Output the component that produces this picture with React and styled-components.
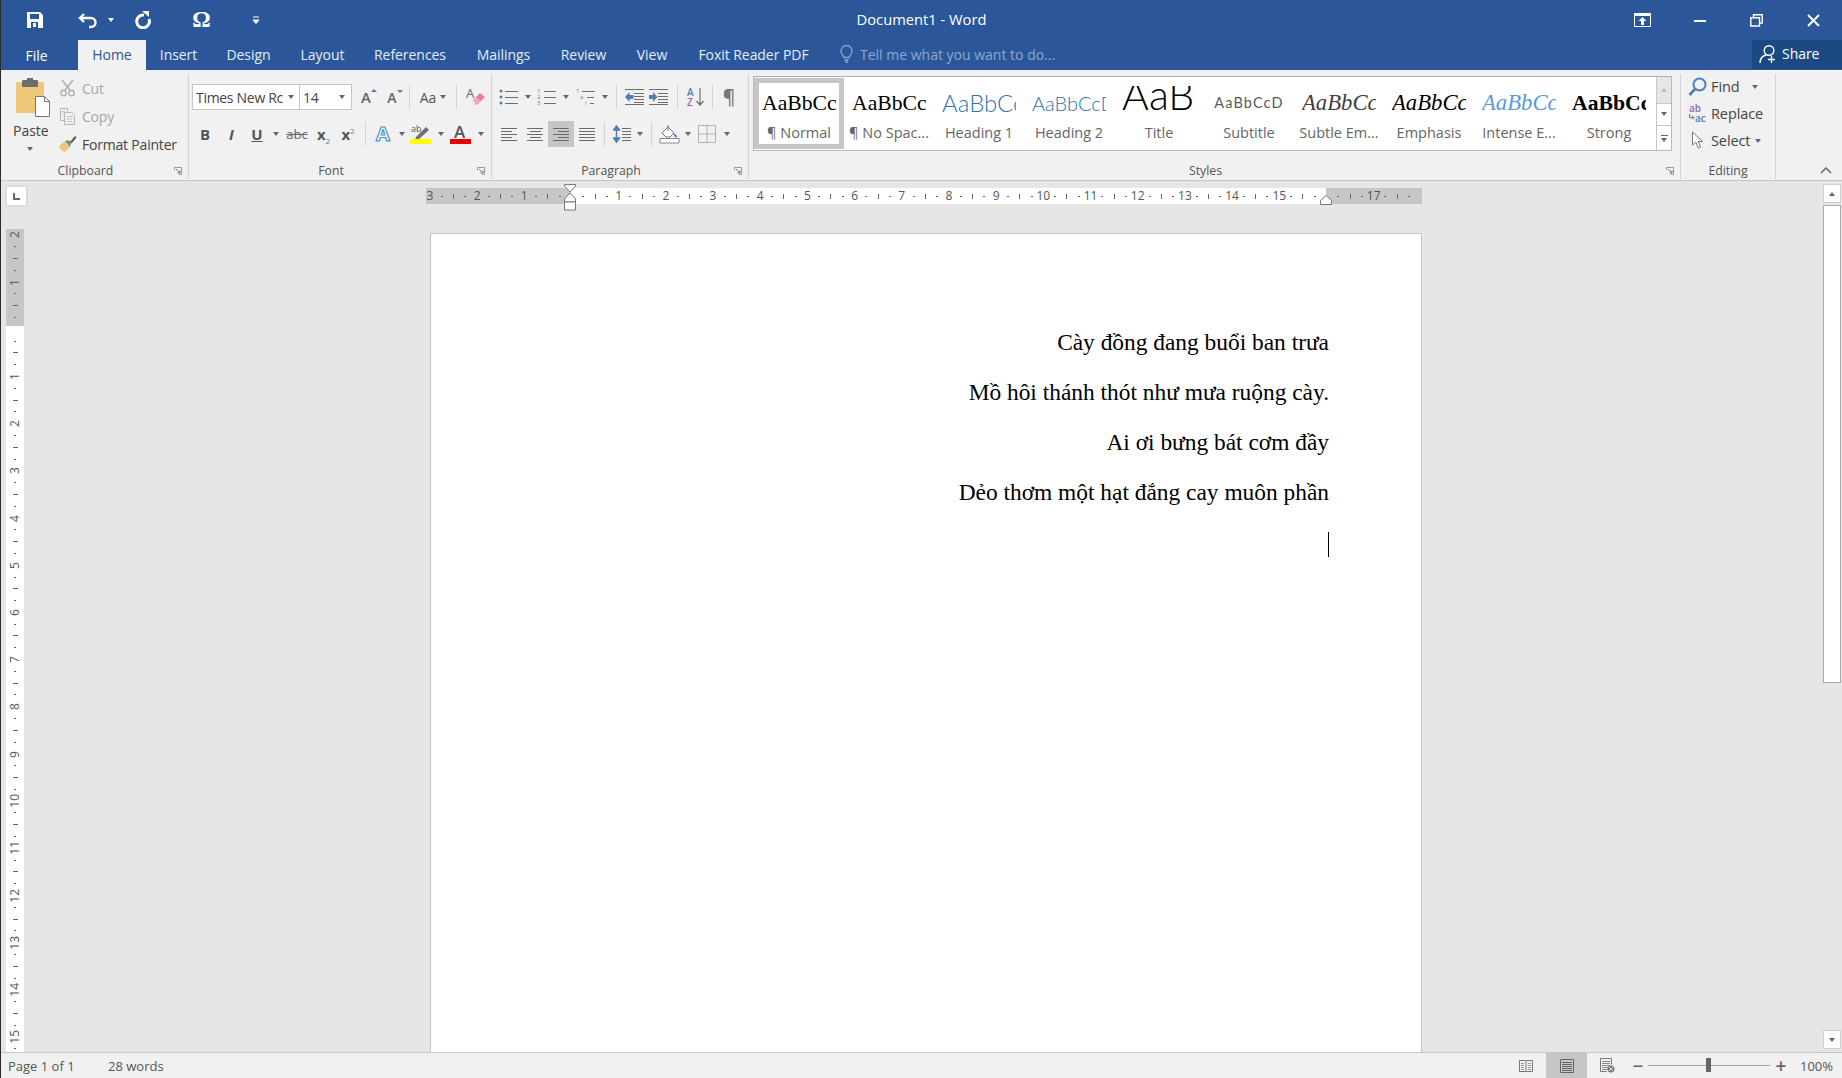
import React from 'react'
import styled, { createGlobalStyle, css } from 'styled-components'

const UI_FONT = '"Open Sans", "Noto Sans", sans-serif'
const SERIF = '"Liberation Serif", "Times New Roman", serif'

const GlobalStyle = createGlobalStyle`
  html, body { margin: 0; padding: 0; background: #e6e6e6; }
  body { font-family: ${UI_FONT}; overflow: hidden; }
  * { box-sizing: border-box; }
`

//Icons
const Ico = ({ w = 18, h = 18, children }) => (
  <svg width={w} height={h} viewBox={`0 0 ${w} ${h}`} fill="none">{children}</svg>
)

const SaveIcon = () => (
  <Ico>
    <path fillRule="evenodd" fill="#fff" d="M1 1h13l3 3v13H1zM4 3v5h9V3zM5 11v6h7v-6z" />
    <rect x="7" y="12" width="3" height="4" fill="#fff" />
  </Ico>
)
const UndoIcon = () => (
  <Ico w={20} h={18}>
    <path d="M6 3 2 7l4 4M3 7h10a4 4 0 0 1 0 9h-2" stroke="#fff" strokeWidth="2.4" />
  </Ico>
)
const RedoIcon = () => (
  <Ico>
    <path d="M11 4a6.4 6.4 0 1 0 5 4" stroke="#fff" strokeWidth="3" />
    <path d="M9 0h7v6z" fill="#fff" />
  </Ico>
)
const CustomizeIcon = () => (
  <Ico w={8} h={8}>
    <path d="M1 1h6M1 4h6L4 7.5z" stroke="#fff" fill="#fff" strokeWidth="1" />
  </Ico>
)
const DisplayIcon = () => (
  <Ico w={17} h={14}>
    <path d="M.5 2.5h16v11H.5z" stroke="#fff" />
    <path d="M0 0h17v2H0z" fill="#fff" />
    <path d="M8.5 4 4.5 8H7v4h3V8h2.5z" fill="#fff" />
  </Ico>
)
const MinIcon = () => (
  <Ico w={12} h={12}><rect y="6" width="12" height="2" fill="#fff" /></Ico>
)
const RestoreIcon = () => (
  <Ico w={13} h={13}>
    <path d="M3.5 3V.8h8.7v8.2H9.5M.8 3.8h8.7V12H.8z" stroke="#fff" strokeWidth="1.4" />
  </Ico>
)
const CloseIcon = () => (
  <Ico w={13} h={13}><path d="M1 1l11 11M12 1 1 12" stroke="#fff" strokeWidth="2" /></Ico>
)
const BulbIcon = () => (
  <Ico w={13} h={18}>
    <path d="M4 12.5C3.4 10.5 1 9.5 1 6a5.5 5.5 0 0 1 11 0c0 3.500-2.400 4.500-3 6.500zM4.500 15h4M5 17h3" stroke="#8ea6ce" strokeWidth="1.300" />
  </Ico>
)
const ShareIcon = () => (
  <Ico w={20} h={20}>
    <circle cx="10" cy="6.500" r="4.800" stroke="#fff" strokeWidth="1.400" />
    <path d="M1 19c0-4 2.500-7 6-8M12.500 12v7M9 15.500h7" stroke="#fff" strokeWidth="1.400" />
  </Ico>
)
const PasteIcon = () => (
  <Ico w={36} h={40}>
    <rect x="1" y="4" width="28" height="31" fill="#eec77b" />
    <rect x="7" y="2" width="16" height="7" rx="1" fill="#6d6d6d" />
    <rect x="12" y="0" width="6" height="4" fill="#6d6d6d" />
    <path d="M20.500 18.500h9l5 5v15h-14z" fill="#fff" stroke="#777" />
    <path d="M29.500 18.500v5h5" stroke="#777" />
  </Ico>
)
const CutIcon = () => (
  <Ico>
    <path d="M3 1l8 10M14 1 6 11" stroke="#b0b0b0" strokeWidth="1.600" />
    <circle cx="4.500" cy="14" r="2.700" stroke="#b0b0b0" strokeWidth="1.400" />
    <circle cx="12.500" cy="14" r="2.700" stroke="#b0b0b0" strokeWidth="1.400" />
  </Ico>
)
const CopyIcon = () => (
  <Ico>
    <path d="M1.500 1.500h7v3M1.500 1.500v12h4" stroke="#b5b5b5" />
    <path d="M5.500 5.500h7l3 3v9h-10z" stroke="#b5b5b5" />
    <path d="M7.500 9.500h6M7.500 12h6M7.500 14.500h6M3 4.500h3M3 7h2" stroke="#c5c5c5" />
  </Ico>
)
const PainterIcon = () => (
  <Ico>
    <path d="M0 11l6-5 5 6-5 5c-2 0-5-3-6-6z" fill="#eec77b" />
    <path d="M6 6l4-1 2 3-1 4z" fill="#8b8b8b" />
    <path d="M11 7l5-6 1.500 1.500-5 6z" fill="#555" />
  </Ico>
)
const EraserIcon = () => (
  <Ico w={20} h={20}>
    <text x="0" y="11" fontSize="13" fontFamily={UI_FONT} fill="#666">A</text>
    <path d="M7 13l7-7 5 4-7 7-2 1z" fill="#ea7f97" />
    <path d="M7 13l3-3 5 4-3 3-2 1z" fill="#f2a9b9" />
  </Ico>
)
const TextEffectIcon = () => (
  <Ico w={18} h={20}>
    <text x="1" y="17" fontSize="20" fontWeight="700" fontFamily={UI_FONT} fill="#fff" stroke="#4c8fcf" strokeWidth="1.200">A</text>
  </Ico>
)
const HighlightIcon = () => (
  <Ico w={22} h={20}>
    <text x="1" y="8" fontSize="9" fontFamily={UI_FONT} fill="#555">ab</text>
    <path d="M6 13 16 3l3 3-10 9-4 1z" fill="#6f6f6f" />
    <rect y="15" width="21" height="5" fill="#ffff00" />
  </Ico>
)
const FontColorIcon = () => (
  <Ico w={22} h={20}>
    <text x="4" y="14" fontSize="17" fontWeight="600" fontFamily={UI_FONT} fill="#555">A</text>
    <rect y="15" width="21" height="5" fill="#e60000" />
  </Ico>
)

const Lines = ({ x = 0, w, ys, color = '#6e6e6e' }) => (
  <>
    {ys.map((y) => (
      <rect key={y} x={x} y={y} width={w} height="1" fill={color} />
    ))}
  </>
)
const BulletsIcon = () => (
  <Ico w={20} h={18}>
    <circle cx="2" cy="3" r="1.500" fill="#4f7fb8" />
    <circle cx="2" cy="9" r="1.500" fill="#4f7fb8" />
    <circle cx="2" cy="15" r="1.500" fill="#4f7fb8" />
    <Lines x={6} w={13} ys={[3, 9, 15]} />
  </Ico>
)
const NumberingIcon = () => (
  <Ico w={20} h={18}>
    {['1', '2', '3'].map((n, i) => (
      <text key={n} x="0" y={5 + i * 6} fontSize="6" fontFamily={UI_FONT} fill="#4f7fb8">{n}</text>
    ))}
    <Lines x={7} w={12} ys={[3, 9, 15]} />
  </Ico>
)
const MultilevelIcon = () => (
  <Ico w={20} h={18}>
    <text x="0" y="5" fontSize="6" fontFamily={UI_FONT} fill="#4f7fb8">1</text>
    <text x="4" y="11" fontSize="6" fontFamily={UI_FONT} fill="#9a64a8">a</text>
    <text x="9" y="17" fontSize="6" fontFamily={UI_FONT} fill="#4f7fb8">i</text>
    <Lines x={6} w={13} ys={[3]} />
    <Lines x={11} w={7} ys={[9]} />
    <Lines x={14} w={4} ys={[15]} />
  </Ico>
)
const IndentIcon = ({ right }) => (
  <Ico w={20} h={18}>
    <Lines w={19} ys={[1, 16]} />
    <Lines x={9} w={10} ys={[5, 8, 11, 14]} />
    {right ? (
      <path d="M0 7h4V4l4.500 5L4 14v-3H0z" fill="#4f7fb8" />
    ) : (
      <path d="M8.500 7h-4V4L0 9l4.500 5v-3h4z" fill="#4f7fb8" />
    )}
  </Ico>
)
const SortIcon = () => (
  <Ico w={18} h={20}>
    <text x="0" y="9" fontSize="10" fontWeight="600" fontFamily={UI_FONT} fill="#4f7fb8">A</text>
    <text x="0" y="19" fontSize="10" fontWeight="600" fontFamily={UI_FONT} fill="#9a64a8">Z</text>
    <path d="M13 1v17M9.500 14l3.500 4 3.500-4" stroke="#6e6e6e" strokeWidth="1.200" />
  </Ico>
)
const AlignIcon = ({ kind }) => {
  const rows = [
    [0, 16], [kind === 'center' ? 3 : kind === 'right' ? 5 : 0, kind === 'justify' ? 16 : 11],
    [0, 16], [kind === 'center' ? 3 : kind === 'right' ? 5 : 0, kind === 'justify' ? 16 : 11],
    [0, 16],
  ]
  return (
    <Ico w={16} h={14}>
      {rows.map(([x, w], i) => (
        <rect key={i} x={x} y={1 + i * 3} width={w} height="1" fill="#6a6a6a" />
      ))}
    </Ico>
  )
}
const LineSpacingIcon = () => (
  <Ico w={18} h={20}>
    <path d="M3.500 2 .5 6h6zM3.500 18l-3-4h6zM3.500 5v10" stroke="#4f7fb8" fill="#4f7fb8" strokeWidth="1.500" />
    <Lines x={9} w={9} ys={[4, 7, 10, 13, 16]} />
  </Ico>
)
const ShadingIcon = () => (
  <Ico w={21} h={20}>
    <path d="M1 14.500h19v4.500H1z" stroke="#888" fill="#fff" />
    <path d="M3 9l6-6 6 6-4 4H7z" fill="#fff" stroke="#777" />
    <path d="M9 1v6" stroke="#777" />
    <path d="M15 9c2 2 3.500 3 3 5l-3-2z" fill="#4f7fb8" />
  </Ico>
)
const BordersIcon = () => (
  <Ico w={18} h={18}>
    <path d="M.5.5h17v17H.5zM9 .5v17M.5 9h17" stroke="#777" strokeDasharray="1 1" />
  </Ico>
)
const FindIcon = () => (
  <Ico w={20} h={20}>
    <circle cx="11.500" cy="7.500" r="6" stroke="#4f7fb8" strokeWidth="2" />
    <path d="M7 12l-5.500 6" stroke="#4f7fb8" strokeWidth="2.600" />
  </Ico>
)
const ReplaceIcon = () => (
  <Ico w={20} h={20}>
    <text x="1" y="8" fontSize="10" fontWeight="600" fontFamily={UI_FONT} fill="#9a64a8">ab</text>
    <text x="7" y="18" fontSize="10" fontWeight="600" fontFamily={UI_FONT} fill="#4f7fb8">ac</text>
    <path d="M1.500 10v3.500H6M4 11.500l2 2-2 2" stroke="#4f7fb8" strokeWidth="1" />
  </Ico>
)
const SelectIcon = () => (
  <Ico w={14} h={20}>
    <path d="M1.500 1v13l3.300-3 2.500 6 2.400-1-2.500-5.500H11.500z" fill="#fff" stroke="#777" />
  </Ico>
)
const Launcher = () => (
  <Ico w={8} h={8}>
    <path d="M.5 3V.5h7v7H5" stroke="#999" />
    <path d="M2 2l4 4M6 3.500V6H3.500" stroke="#777" />
  </Ico>
)
const ChevronUp = () => (
  <Ico w={12} h={8}><path d="M1 7l5-5 5 5" stroke="#666" strokeWidth="1.500" /></Ico>
)
const ReadIcon = () => (
  <Ico w={14} h={14}>
    <path d="M.5 1.500h6l.5 1 .5-1h6v11h-6L7 13l-.5-.500h-6zM7 3v10" stroke="#777" />
    <Lines x={2} w={3} ys={[4, 6, 8, 10]} color="#999" />
    <Lines x={9} w={3} ys={[4, 6, 8, 10]} color="#999" />
  </Ico>
)
const PrintIcon = () => (
  <Ico w={14} h={14}>
    <path d="M.5.500h13v13H.5z" stroke="#666" />
    <Lines x={2} w={10} ys={[3, 5, 7, 9, 11]} color="#666" />
  </Ico>
)
const WebIcon = () => (
  <Ico w={15} h={15}>
    <path d="M.5.500h11v6M.5.500v13h6" stroke="#777" />
    <Lines x={2} w={8} ys={[3, 5, 7, 9, 11]} color="#888" />
    <circle cx="11" cy="11" r="3.500" fill="#777" />
    <path d="M9 9l4 4M13 9l-4 4" stroke="#ddd" />
  </Ico>
)

//Data
const TABS = [
  ['Insert', 65], ['Design', 75], ['Layout', 73], ['References', 102],
  ['Mailings', 85], ['Review', 75], ['View', 62], ['Foxit Reader PDF', 141],
]

const GALLERY = [
  { name: '¶ Normal', kind: 'normal', active: true },
  { name: '¶ No Spac...', kind: 'normal' },
  { name: 'Heading 1', kind: 'h1', sample: 'AaBbCcD' },
  { name: 'Heading 2', kind: 'h2', sample: 'AaBbCcDd' },
  { name: 'Title', kind: 'title', sample: 'AaB' },
  { name: 'Subtitle', kind: 'subtitle', sample: 'AaBbCcD' },
  { name: 'Subtle Em...', kind: 'subtle' },
  { name: 'Emphasis', kind: 'emphasis' },
  { name: 'Intense E...', kind: 'intense' },
  { name: 'Strong', kind: 'strong', sample: 'AaBbCc' },
]

const POEM = [
  'Cày đồng đang buổi ban trưa',
  'Mồ hôi thánh thót như mưa ruộng cày.',
  'Ai ơi bưng bát cơm đầy',
  'Dẻo thơm một hạt đắng cay muôn phần',
]

const range = (from, to) => Array.from({ length: to - from + 1 }, (_, i) => from + i)
const H_TICKS = range(-12, 71)
const V_TICKS = range(-8, 61)

//the right indent marker sits on the 16 of the horizontal ruler
const tickOf = (i) => {
  if (i === 0 || i === 64) return null
  if (i % 4 === 0) return Math.abs(i / 4)
  return i % 4 === 2 || i % 4 === -2 ? 'long' : 'dot'
}

const PREVIEW_STYLES = {
  normal: css`font-family: ${SERIF}; font-size: 21.700px; color: #000;`,
  h1: css`font-family: Lato, sans-serif; font-weight: 300; font-size: 24px; color: #2e74b5;`,
  h2: css`font-family: Lato, sans-serif; font-weight: 300; font-size: 20px; color: #2e74b5;`,
  title: css`font-family: Lato, sans-serif; font-weight: 300; font-size: 41px; line-height: 17px; color: #000;`,
  subtitle: css`font-family: Lato, sans-serif; font-size: 14.500px; letter-spacing: 1.100px; color: #5a5a5a; text-align: center;`,
  subtle: css`font-family: ${SERIF}; font-style: italic; font-size: 22.700px; color: #404040;`,
  emphasis: css`font-family: ${SERIF}; font-style: italic; font-size: 22.700px; color: #000;`,
  intense: css`font-family: ${SERIF}; font-style: italic; font-size: 22.700px; color: #5b9bd5;`,
  strong: css`font-family: ${SERIF}; font-weight: 700; font-size: 21.700px; color: #000;`,
}

//Page
const App = () => (
  <Window>
    <GlobalStyle />
    <TitleBar>
      <QuickAccess>
        <QatSlot $w={25} $ml={21}><SaveIcon /></QatSlot>
        <QatSlot $w={25} $ml={28}><UndoIcon /></QatSlot>
        <QatSlot $w={12} $ml={5}><Caret $light /></QatSlot>
        <QatSlot $w={25} $ml={12}><RedoIcon /></QatSlot>
        <QatSlot $w={25} $ml={35}><Omega>Ω</Omega></QatSlot>
        <QatSlot $w={12} $ml={36}><CustomizeIcon /></QatSlot>
      </QuickAccess>
      <WindowTitle>Document1 - Word</WindowTitle>
      <WindowControls>
        <ControlSlot><DisplayIcon /></ControlSlot>
        <ControlSlot><MinIcon /></ControlSlot>
        <ControlSlot><RestoreIcon /></ControlSlot>
        <ControlSlot><CloseIcon /></ControlSlot>
      </WindowControls>
    </TitleBar>

    <TabBar>
      <FileTab>File</FileTab>
      <HomeTab>Home</HomeTab>
      {TABS.map(([label, w]) => (
        <Tab key={label} $w={w}>{label}</Tab>
      ))}
      <TellMe><BulbIcon /><span>Tell me what you want to do...</span></TellMe>
      <ShareButton><ShareIcon /><span>Share</span></ShareButton>
    </TabBar>

    <Ribbon>
      <Group $w={188}>
        <ClipboardBody>
          <PasteButton>
            <PasteIcon />
            <PasteLabel>Paste</PasteLabel>
            <Caret />
          </PasteButton>
          <ClipColumn>
            <ClipRow $off><CutIcon /><span>Cut</span></ClipRow>
            <ClipRow $off><CopyIcon /><span>Copy</span></ClipRow>
            <ClipRow><PainterIcon /><span>Format Painter</span></ClipRow>
          </ClipColumn>
        </ClipboardBody>
        <GroupLabel>Clipboard</GroupLabel>
        <LauncherSlot><Launcher /></LauncherSlot>
      </Group>

      <Group $w={303}>
        <TwoRows>
          <ToolRow>
            <FontName>Times New Rc<Caret /></FontName>
            <FontSize>14<Caret /></FontSize>
            <Tool $w={26}><GrowGlyph>A<Tip /></GrowGlyph></Tool>
            <Tool $w={26}><GrowGlyph $small>A<Tip $down /></GrowGlyph></Tool>
            <Divider $l={4} $r={4} />
            <Tool $w={38}><CaseGlyph>Aa</CaseGlyph><Caret /></Tool>
            <Divider $l={4} $r={4} />
            <Tool $w={30}><EraserIcon /></Tool>
          </ToolRow>
          <ToolRow $pl={3}>
            <Tool $w={26}><BoldGlyph>B</BoldGlyph></Tool>
            <Tool $w={27}><BoldGlyph $italic>I</BoldGlyph></Tool>
            <Tool $w={24}><BoldGlyph $under>U</BoldGlyph></Tool>
            <Tool $w={14}><Caret /></Tool>
            <Tool $w={28}><StrikeGlyph>abc</StrikeGlyph></Tool>
            <Tool $w={25}><ScriptGlyph>x<sub>2</sub></ScriptGlyph></Tool>
            <Tool $w={24}><ScriptGlyph>x<sup>2</sup></ScriptGlyph></Tool>
            <Divider $l={5} $r={5} />
            <Tool $w={26}><TextEffectIcon /></Tool>
            <Tool $w={10}><Caret /></Tool>
            <Tool $w={28}><HighlightIcon /></Tool>
            <Tool $w={12}><Caret /></Tool>
            <Tool $w={28}><FontColorIcon /></Tool>
            <Tool $w={12}><Caret /></Tool>
          </ToolRow>
        </TwoRows>
        <GroupLabel>Font</GroupLabel>
        <LauncherSlot><Launcher /></LauncherSlot>
      </Group>

      <Group $w={257}>
        <TwoRows>
          <ToolRow $pl={4}>
            <Tool $w={26}><BulletsIcon /></Tool>
            <Tool $w={12}><Caret /></Tool>
            <Tool $w={26}><NumberingIcon /></Tool>
            <Tool $w={12}><Caret /></Tool>
            <Tool $w={28}><MultilevelIcon /></Tool>
            <Tool $w={10}><Caret /></Tool>
            <Divider $l={6} $r={6} />
            <Tool $w={24}><IndentIcon /></Tool>
            <Tool $w={24}><IndentIcon right /></Tool>
            <Divider $l={6} $r={6} />
            <Tool $w={24}><SortIcon /></Tool>
            <Divider $l={4} $r={4} />
            <Tool $w={24}><Pilcrow>¶</Pilcrow></Tool>
          </ToolRow>
          <ToolRow $pl={4}>
            <Tool $w={26}><AlignIcon kind="left" /></Tool>
            <Tool $w={26}><AlignIcon kind="center" /></Tool>
            <Tool $w={26} $active><AlignIcon kind="right" /></Tool>
            <Tool $w={26}><AlignIcon kind="justify" /></Tool>
            <Divider $l={4} $r={4} />
            <Tool $w={26}><LineSpacingIcon /></Tool>
            <Tool $w={10}><Caret /></Tool>
            <Divider $l={6} $r={4} />
            <Tool $w={26}><ShadingIcon /></Tool>
            <Tool $w={12}><Caret /></Tool>
            <Tool $w={26}><BordersIcon /></Tool>
            <Tool $w={14}><Caret /></Tool>
          </ToolRow>
        </TwoRows>
        <GroupLabel>Paragraph</GroupLabel>
        <LauncherSlot><Launcher /></LauncherSlot>
      </Group>

      <Group $w={932}>
        <Gallery>
          <GalleryItems>
            {GALLERY.map((item) => (
              <StyleCard key={item.name} $active={item.active}>
                <Preview $kind={item.kind}>{item.sample || 'AaBbCc'}</Preview>
                <StyleName>{item.name}</StyleName>
              </StyleCard>
            ))}
          </GalleryItems>
          <GalleryScroll>
            <GalleryButton $h={26} $off><Caret $up $pale /></GalleryButton>
            <GalleryButton $h={23}><Caret /></GalleryButton>
            <GalleryButton $h={25}><MoreGlyph /><Caret /></GalleryButton>
          </GalleryScroll>
        </Gallery>
        <GroupLabel>Styles</GroupLabel>
        <LauncherSlot><Launcher /></LauncherSlot>
      </Group>

      <Group $w={95}>
        <EditColumn>
          <EditRow><FindIcon /><span>Find</span><EditCaret $gap={9}><Caret /></EditCaret></EditRow>
          <EditRow><ReplaceIcon /><span>Replace</span></EditRow>
          <EditRow><SelectIcon /><span>Select</span><EditCaret $gap={2}><Caret /></EditCaret></EditRow>
        </EditColumn>
        <GroupLabel $pr={0}>Editing</GroupLabel>
      </Group>

      <CollapseSlot><ChevronUp /></CollapseSlot>
    </Ribbon>

    <Workspace>
      <LeftRail>
        <TabStop><TabStopMark /></TabStop>
        <VRuler>
          {V_TICKS.map((i) => {
            const t = tickOf(i)
            return (
              <VCell key={i}>
                {typeof t === 'number' && <VNum>{t}</VNum>}
                {t === 'long' && <VLong />}
                {t === 'dot' && <Dot />}
              </VCell>
            )
          })}
        </VRuler>
      </LeftRail>

      <Canvas>
        <HRuler>
          {H_TICKS.map((i) => {
            const t = tickOf(i)
            return (
              <HCell key={i}>
                {typeof t === 'number' && <HNum>{t}</HNum>}
                {t === 'long' && <HLong />}
                {t === 'dot' && <Dot />}
              </HCell>
            )
          })}
          <IndentMarker>
            <svg width="12" height="27" viewBox="0 0 12 27" fill="#fff" stroke="#777">
              <path d="M.5.500h11V2L6 8 .5 2z" />
              <path d="M6 9l5.500 6v3H.5v-3z" />
              <path d="M.5 18h11v8H.5z" />
            </svg>
          </IndentMarker>
          <RightMarker>
            <svg width="12" height="10" viewBox="0 0 12 10" fill="#fff" stroke="#777">
              <path d="M6 .5l5.500 5V9.500H.5v-4z" />
            </svg>
          </RightMarker>
        </HRuler>
        <Page>
          {POEM.map((line) => (
            <PoemLine key={line}>{line}</PoemLine>
          ))}
          <PoemLine><TextCaret /></PoemLine>
        </Page>
      </Canvas>

      <ScrollBar>
        <ScrollButton><Caret $up /></ScrollButton>
        <ScrollThumb />
        <ScrollButton $bottom><Caret /></ScrollButton>
      </ScrollBar>
    </Workspace>

    <StatusBar>
      <StatusText $w={100}>Page 1 of 1</StatusText>
      <StatusText>28 words</StatusText>
      <StatusRight>
        <ViewSlot><ReadIcon /></ViewSlot>
        <ViewSlot $active><PrintIcon /></ViewSlot>
        <ViewSlot><WebIcon /></ViewSlot>
        <ZoomGlyph $w={20}>−</ZoomGlyph>
        <ZoomTrack><ZoomThumb /></ZoomTrack>
        <ZoomGlyph $w={22}>+</ZoomGlyph>
        <ZoomValue>100%</ZoomValue>
      </StatusRight>
    </StatusBar>
  </Window>
)

const Window = styled.div`
  width: 1842px;
  height: 1078px;
  display: flex;
  flex-direction: column;
  overflow: hidden;
  border-left: 1px solid #2c2c2c;
  background: #e6e6e6;
`

const TitleBar = styled.div`
  height: 40px;
  flex: none;
  display: grid;
  grid-template-columns: 1fr auto 1fr;
  align-items: center;
  background: #2b579a;
`
const QuickAccess = styled.div`
  display: flex;
  align-items: center;
`
const QatSlot = styled.div`
  width: ${(p) => p.$w}px;
  margin-left: ${(p) => p.$ml || 0}px;
  display: flex;
  align-items: center;
  justify-content: center;
`
const Omega = styled.span`
  font-family: ${SERIF};
  font-weight: 700;
  font-size: 23px;
  line-height: 24px;
  color: #fff;
`
const WindowTitle = styled.div`
  font-size: 14.700px;
  line-height: 38px;
  padding-bottom: 2px;
  color: #fff;
`
const WindowControls = styled.div`
  display: flex;
  justify-content: flex-end;
`
const ControlSlot = styled.div`
  width: 57px;
  display: flex;
  align-items: center;
  justify-content: center;
`

const TabBar = styled.div`
  height: 30px;
  flex: none;
  display: flex;
  align-items: stretch;
  background: #2b579a;
  font-size: 14px;
  color: #e4ecf8;
`
const Tab = styled.div`
  width: ${(p) => p.$w}px;
  display: flex;
  align-items: center;
  justify-content: center;
  padding-bottom: 2px;
  white-space: nowrap;
  letter-spacing: -0.050px;
`
const FileTab = styled(Tab)`
  width: 71px;
  margin-right: 6px;
  padding-bottom: 0;
  color: #fff;
`
const HomeTab = styled(Tab)`
  width: 68px;
  background: #f1f1f1;
  color: #2b579a;
`
const TellMe = styled.div`
  margin-left: 16px;
  display: flex;
  align-items: center;
  gap: 7px;
  padding-bottom: 2px;
  color: #8ea6ce;
`
const ShareButton = styled.div`
  margin-left: auto;
  width: 90px;
  height: 29px;
  display: flex;
  align-items: center;
  gap: 3px;
  padding: 0 0 2px 7px;
  background: #1b4a83;
  color: #fff;
  letter-spacing: -0.050px;
`

const Ribbon = styled.div`
  height: 111px;
  flex: none;
  display: flex;
  background: #f1f1f1;
  border-bottom: 1px solid #c6c6c6;
  color: #444;
`
const Group = styled.div`
  position: relative;
  width: ${(p) => p.$w}px;
  flex: none;
  display: flex;
  flex-direction: column;
  margin: 4px 0 1px;
  border-right: 1px solid #d4d4d4;
`
const GroupLabel = styled.div`
  margin-top: auto;
  flex: none;
  height: 20px;
  line-height: 23px;
  padding-right: ${(p) => (p.$pr === undefined ? 18 : p.$pr)}px;
  text-align: center;
  font-size: 12.300px;
  color: #555;
`
const LauncherSlot = styled.div`
  position: absolute;
  right: 6px;
  bottom: 4px;
  line-height: 0;
`
const CollapseSlot = styled.div`
  margin-left: auto;
  align-self: flex-end;
  padding: 0 10px 6px 0;
  line-height: 0;
`

const Caret = styled.span`
  display: inline-block;
  width: 0;
  height: 0;
  flex: none;
  border-left: 3.500px solid transparent;
  border-right: 3.500px solid transparent;
  ${(p) =>
    p.$up
      ? css`border-bottom: 4px solid ${p.$pale ? '#bdbdbd' : '#666'};`
      : css`border-top: 4px solid ${p.$light ? '#fff' : '#666'};`}
`

const ClipboardBody = styled.div`
  display: flex;
  height: 84px;
  flex: none;
`
const PasteButton = styled.div`
  width: 58px;
  padding: 4px 0 0 14px;
  display: flex;
  flex-direction: column;
  align-items: flex-start;
  ${Caret} {
    margin: 7px 0 0 12px;
  }
`
const PasteLabel = styled.div`
  margin: 3px 0 0 -2px;
  font-size: 14px;
  line-height: 19px;
`
const ClipColumn = styled.div`
  display: flex;
  flex-direction: column;
`
const ClipRow = styled.div`
  height: 28px;
  display: flex;
  align-items: center;
  gap: 5px;
  font-size: 14px;
  white-space: nowrap;
  letter-spacing: -0.200px;
  color: ${(p) => (p.$off ? '#a6a6a6' : '#444')};
`

const TwoRows = styled.div`
  display: flex;
  flex-direction: column;
  gap: 11px;
  padding-top: 10px;
`
const ToolRow = styled.div`
  height: 26px;
  display: flex;
  align-items: stretch;
  padding-left: ${(p) => (p.$pl === undefined ? 3 : p.$pl)}px;
`
const Tool = styled.div`
  width: ${(p) => p.$w}px;
  flex: none;
  display: flex;
  align-items: center;
  justify-content: center;
  gap: 4px;
  background: ${(p) => (p.$active ? '#c6c6c6' : 'transparent')};
`
const Divider = styled.div`
  width: 1px;
  flex: none;
  margin: 1px ${(p) => p.$r}px 1px ${(p) => p.$l}px;
  background: #d4d4d4;
`
const FontName = styled.div`
  width: 108px;
  flex: none;
  display: flex;
  align-items: center;
  justify-content: space-between;
  padding: 0 5px 0 3px;
  background: #fff;
  border: 1px solid #c6c6c6;
  font-size: 14px;
  overflow: hidden;
  white-space: nowrap;
  letter-spacing: -0.300px;
`
const FontSize = styled(FontName)`
  width: 52px;
  border-left: 0;
  margin-right: 1px;
  padding-left: 3px;
  padding-right: 6px;
`
const GrowGlyph = styled.span`
  position: relative;
  font-size: ${(p) => (p.$small ? 14 : 15)}px;
  font-weight: 600;
  color: #666;
`
const Tip = styled.i`
  position: absolute;
  top: 2px;
  right: -6px;
  border-left: 3px solid transparent;
  border-right: 3px solid transparent;
  ${(p) => (p.$down ? 'border-top: 3px solid #4f7fb8;' : 'border-bottom: 3px solid #4f7fb8;')}
`
const CaseGlyph = styled.span`
  font-size: 14px;
  color: #555;
`
const BoldGlyph = styled.span`
  font-size: 15px;
  font-weight: 700;
  color: #555;
  font-style: ${(p) => (p.$italic ? 'italic' : 'normal')};
  text-decoration: ${(p) => (p.$under ? 'underline' : 'none')};
`
const StrikeGlyph = styled.span`
  font-size: 13px;
  color: #666;
  text-decoration: line-through;
`
const ScriptGlyph = styled.span`
  font-size: 15px;
  font-weight: 700;
  color: #555;
  sub, sup {
    font-size: 8px;
    font-weight: 400;
    color: #4f7fb8;
    line-height: 0;
  }
`
const Pilcrow = styled.span`
  font-size: 19px;
  font-weight: 600;
  color: #777;
`

const Gallery = styled.div`
  margin: 2px 0 0 4px;
  width: 919px;
  height: 75px;
  flex: none;
  display: flex;
  background: #fff;
  border: 1px solid #b4b9c4;
  border-top-color: #a5b0c6;
`
const GalleryItems = styled.div`
  width: 902px;
  flex: none;
  display: flex;
  padding-top: 1px;
`
const StyleCard = styled.div`
  width: 90px;
  height: 71px;
  flex: none;
  display: flex;
  flex-direction: column;
  align-items: center;
  padding-top: 8px;
  box-shadow: ${(p) => (p.$active ? 'inset 0 0 0 5px #c6c6c6' : 'none')};
`
const Preview = styled.div`
  width: 74px;
  height: 34px;
  flex: none;
  line-height: 34px;
  overflow: hidden;
  white-space: nowrap;
  ${(p) => PREVIEW_STYLES[p.$kind]}
`
const StyleName = styled.div`
  font-size: 14.500px;
  line-height: 26px;
  color: #666;
  white-space: nowrap;
`
const GalleryScroll = styled.div`
  flex: 1;
  display: flex;
  flex-direction: column;
  border-left: 1px solid #c6c6c6;
`
const GalleryButton = styled.div`
  height: ${(p) => p.$h}px;
  display: flex;
  flex-direction: column;
  align-items: center;
  justify-content: center;
  gap: 2px;
  background: ${(p) => (p.$off ? '#e6e6e6' : '#fff')};
  & + & {
    border-top: 1px solid #c6c6c6;
  }
`
const MoreGlyph = styled.span`
  width: 7px;
  height: 1px;
  background: #666;
`

const EditColumn = styled.div`
  display: flex;
  flex-direction: column;
  padding-left: 7px;
  margin-top: -1px;
`
const EditRow = styled.div`
  height: 27px;
  display: flex;
  align-items: center;
  gap: 3px;
  font-size: 14.500px;
  white-space: nowrap;
  letter-spacing: -0.100px;
  svg {
    width: 20px;
    flex: none;
  }
`
const EditCaret = styled.span`
  display: flex;
  margin-left: ${(p) => p.$gap}px;
`

const Workspace = styled.div`
  flex: 1;
  min-height: 0;
  display: flex;
  background: #e6e6e6;
`
const LeftRail = styled.div`
  width: 29px;
  flex: none;
  display: flex;
  flex-direction: column;
  padding-left: 4px;
`
const TabStop = styled.div`
  width: 23px;
  height: 22px;
  margin-top: 4px;
  display: flex;
  align-items: center;
  justify-content: center;
  background: #fff;
  border: 2px solid #dcdcdc;
`
const TabStopMark = styled.span`
  width: 7px;
  height: 7px;
  border-left: 2px solid #666;
  border-bottom: 2px solid #666;
`
const VRuler = styled.div`
  width: 18px;
  margin: 22px 0 0 1px;
  flex: 1;
  overflow: hidden;
  background: linear-gradient(to bottom, #c6c6c6 97px, #fff 97px);
`
const VCell = styled.div`
  height: 11.800px;
  display: flex;
  align-items: center;
  justify-content: center;
`
const VNum = styled.span`
  writing-mode: vertical-rl;
  transform: rotate(180deg);
  font-size: 12px;
  line-height: 18px;
  color: #555;
`
const VLong = styled.span`
  width: 5px;
  height: 1px;
  background: #666;
`
const Dot = styled.span`
  width: 2px;
  height: 1px;
  background: #666;
`
const Canvas = styled.div`
  flex: 1;
  min-width: 0;
  display: flex;
  flex-direction: column;
  padding-left: 396px;
`
const HRuler = styled.div`
  position: relative;
  width: 996px;
  height: 16px;
  flex: none;
  margin-top: 7px;
  display: flex;
  background: linear-gradient(to right, #c6c6c6 144.600px, #fff 144.600px, #fff 900px, #c6c6c6 900px);
`
const HCell = styled.div`
  width: 11.800px;
  flex: none;
  display: flex;
  align-items: center;
  justify-content: center;
  &:first-child {
    margin-left: -2px;
  }
`
const HNum = styled.span`
  font-size: 12px;
  line-height: 16px;
  color: #555;
`
const HLong = styled.span`
  width: 1px;
  height: 5px;
  background: #666;
`
const IndentMarker = styled.div`
  position: absolute;
  left: 138px;
  top: -4px;
  line-height: 0;
`
const RightMarker = styled.div`
  position: absolute;
  left: 894px;
  top: 7px;
  line-height: 0;
`
const Page = styled.div`
  width: 992px;
  flex: 1;
  margin: 29px 0 0 4px;
  padding: 83px 92px 0 0;
  background: #fff;
  border: 1px solid #c6c6c6;
  border-bottom: 0;
  font-family: ${SERIF};
  font-size: 23.400px;
  color: #000;
`
const PoemLine = styled.div`
  height: 50px;
  line-height: 50px;
  text-align: right;
  white-space: nowrap;
`
const TextCaret = styled.span`
  display: inline-block;
  width: 1px;
  height: 25px;
  vertical-align: middle;
  background: #000;
`

const ScrollBar = styled.div`
  width: 19px;
  flex: none;
  display: flex;
  flex-direction: column;
`
const ScrollButton = styled.div`
  width: 18px;
  height: 19px;
  flex: none;
  display: flex;
  align-items: center;
  justify-content: center;
  background: #fff;
  border: 1px solid #d0d0d0;
  ${(p) => (p.$bottom ? 'margin: auto 0 3px;' : 'margin-top: 3px;')}
`
const ScrollThumb = styled.div`
  width: 18px;
  height: 478px;
  margin-top: 2px;
  background: #fff;
  border: 1px solid #ababab;
`

const StatusBar = styled.div`
  height: 26px;
  flex: none;
  display: flex;
  align-items: center;
  padding-left: 7px;
  background: #f1f1f1;
  border-top: 1px solid #c6c6c6;
`
const StatusText = styled.div`
  width: ${(p) => (p.$w ? `${p.$w}px` : 'auto')};
  font-size: 13px;
  color: #555;
  white-space: nowrap;
`
const StatusRight = styled.div`
  margin-left: auto;
  align-self: stretch;
  display: flex;
  align-items: center;
`
const ViewSlot = styled.div`
  width: 41px;
  align-self: stretch;
  display: flex;
  align-items: center;
  justify-content: center;
  background: ${(p) => (p.$active ? '#c6c6c6' : 'transparent')};
`
const ZoomGlyph = styled.div`
  width: ${(p) => p.$w}px;
  text-align: center;
  font-size: 19px;
  font-weight: 600;
  line-height: 24px;
  color: #666;
`
const ZoomTrack = styled.div`
  position: relative;
  width: 122px;
  height: 1px;
  background: #a0a0a0;
`
const ZoomThumb = styled.span`
  position: absolute;
  left: 58px;
  top: -7px;
  width: 5px;
  height: 14px;
  background: #666;
`
const ZoomValue = styled.div`
  width: 50px;
  padding-right: 9px;
  text-align: right;
  font-size: 13px;
  color: #555;
`

export default App
